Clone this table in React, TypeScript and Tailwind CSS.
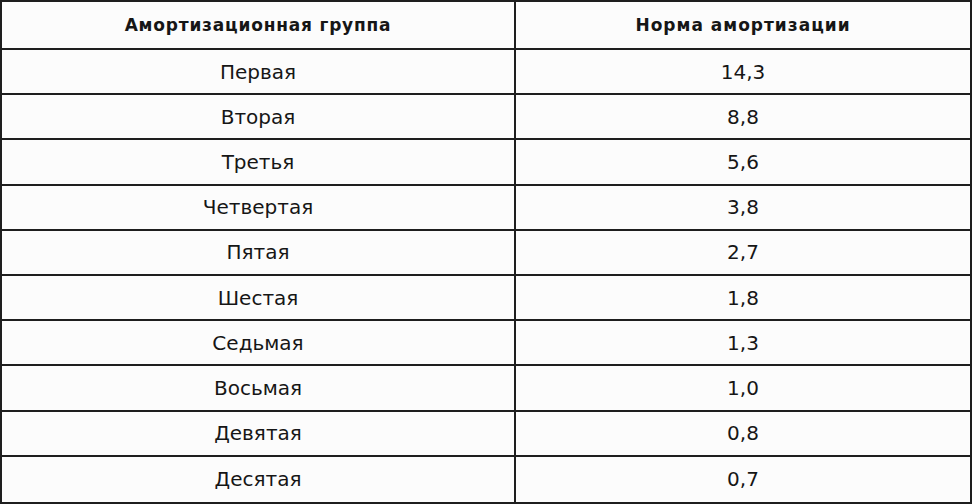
const rows: [string, string][] = [
  ['Первая', '14,3'],
  ['Вторая', '8,8'],
  ['Третья', '5,6'],
  ['Четвертая', '3,8'],
  ['Пятая', '2,7'],
  ['Шестая', '1,8'],
  ['Седьмая', '1,3'],
  ['Восьмая', '1,0'],
  ['Девятая', '0,8'],
  ['Десятая', '0,7'],
];

export default function App() {
  return (
    <div className="w-[972px] h-[504px] bg-[#fcfcfc] border-2 border-[#1e1e1e] grid grid-cols-[514px_1fr] grid-rows-[48px_repeat(10,1fr)] text-[#161616]">
      <div className="flex items-center justify-center border-r-2 border-b-2 border-[#1e1e1e] font-['DejaVu_Sans',sans-serif] font-bold text-[17px] tracking-[0.8px] pt-[2px]">
        Амортизационная группа
      </div>
      <div className="flex items-center justify-center border-b-2 border-[#1e1e1e] font-['DejaVu_Sans',sans-serif] font-bold text-[17px] tracking-[1px] pt-[2px]">
        Норма амортизации
      </div>
      {rows.map(([name, value], i) => {
        const last = i === rows.length - 1;
        return (
          <div key={name} className="contents">
            <div
              className={`flex items-center justify-center border-r-2 border-[#1e1e1e] font-['DejaVu_Sans',sans-serif] text-[20px] ${last ? '' : 'border-b-2'}`}
            >
              {name}
            </div>
            <div
              className={`flex items-center justify-center border-[#1e1e1e] font-['DejaVu_Sans',sans-serif] text-[20px] ${last ? '' : 'border-b-2'}`}
            >
              {value}
            </div>
          </div>
        );
      })}
    </div>
  );
}
